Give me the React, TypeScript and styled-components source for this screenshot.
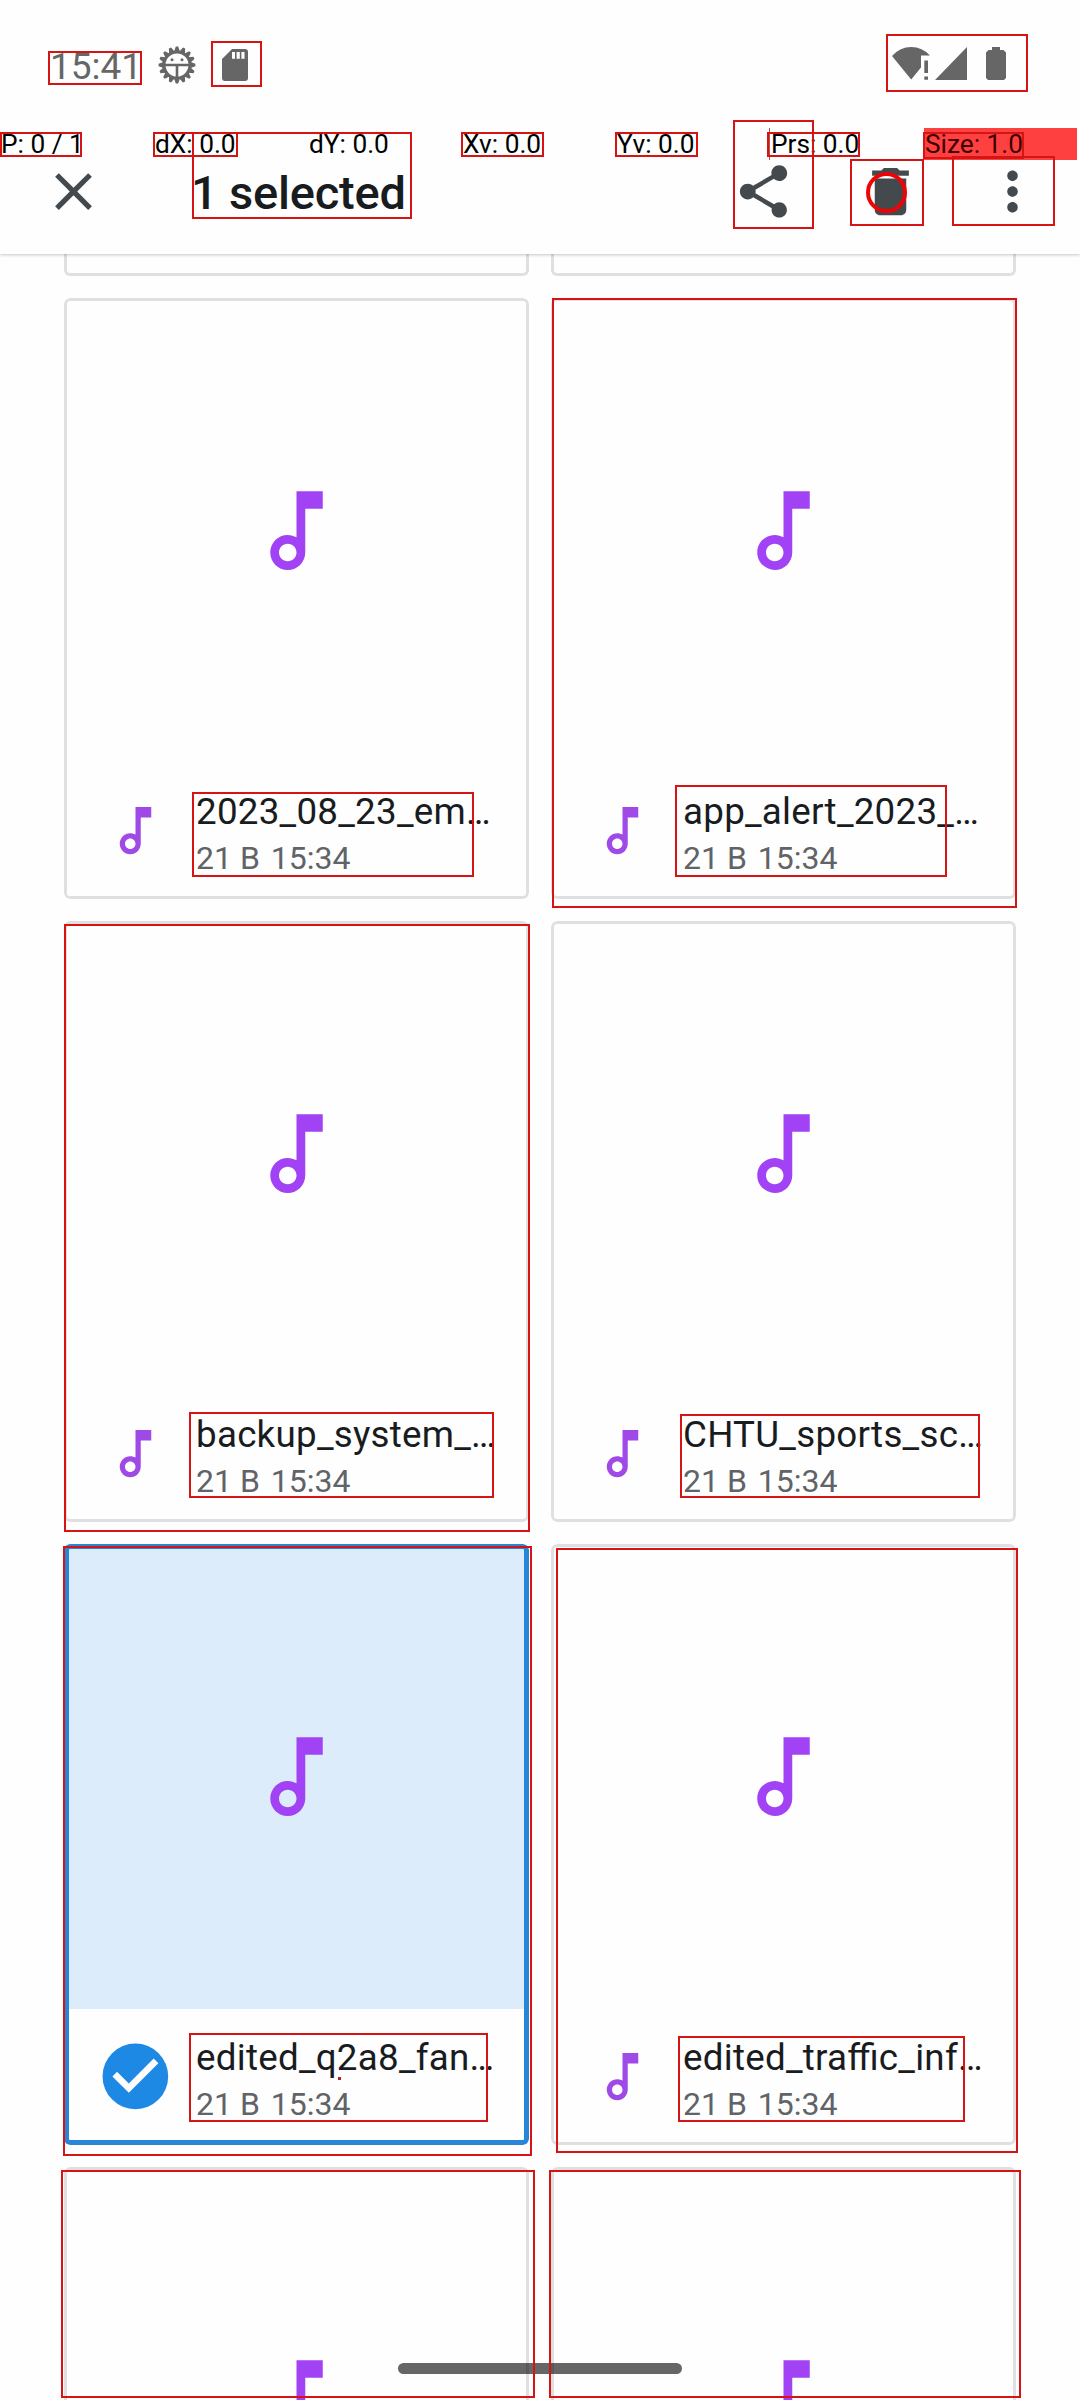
import React from "react";
import styled, { createGlobalStyle, css } from "styled-components";

const GlobalStyle = createGlobalStyle`
  * { box-sizing: border-box; }
  html, body { margin: 0; padding: 0; background: #fefefe; }
  body { font-family: Roboto, "Noto Sans", sans-serif; }
`;

const Screen = styled.div`
  position: relative;
  display: flex;
  flex-direction: column;
  width: 1080px;
  height: 2400px;
  overflow: hidden;
  background: #fefefe;
`;

const StatusBar = styled.header`
  display: flex;
  align-items: center;
  flex: none;
  height: 128px;
  padding: 2px 74px 0 50px;
  color: #666666;
`;

const Clock = styled.span`
  width: 108px;
  padding-top: 3px;
  font-size: 37px;
  line-height: 44px;
  white-space: nowrap;
`;

const StatusIcons = styled.div<{ $gap: number; $end?: boolean }>`
  display: flex;
  align-items: center;
  gap: ${(p) => p.$gap}px;
  margin-left: ${(p) => (p.$end ? "auto" : "0")};
  padding-bottom: ${(p) => (p.$end ? "3px" : "0")};
`;

const BatterySlot = styled.span`
  display: flex;
  margin-left: 14px;
`;

const Toolbar = styled.div`
  display: flex;
  align-items: center;
  flex: none;
  height: 126px;
  padding: 0 36px 0 42px;
  color: #43494d;
  position: relative;
  z-index: 1;
  background: #fefefe;
  box-shadow: 0 1px 3px rgba(0, 0, 0, 0.22);
  clip-path: inset(0 0 -5px 0);
`;

const Title = styled.h1`
  flex: 1;
  margin: 0 0 0 86px;
  padding-top: 3px;
  font-size: 47px;
  font-weight: 500;
  line-height: 56px;
  letter-spacing: -0.2px;
  color: #191c1e;
  white-space: nowrap;
`;

const Actions = styled.div`
  display: grid;
  grid-template-columns: 127.5px 122px 63px;
`;

const Glyph = styled.svg<{ $size: number }>`
  display: block;
  flex: none;
  width: ${(p) => p.$size}px;
  height: ${(p) => p.$size}px;
  fill: currentColor;
`;

const FileGrid = styled.main`
  display: grid;
  grid-template-columns: 465px 465px;
  grid-auto-rows: 601px;
  grid-template-rows: 22px;
  gap: 22px;
  padding-left: 64px;
  flex: none;
`;

const CardTail = styled.div`
  border: 3px solid #e0e0e0;
  border-top: 0;
  border-radius: 0 0 6px 6px;
`;

const Card = styled.article<{ $selected?: boolean }>`
  position: relative;
  display: flex;
  flex-direction: column;
  border-radius: 6px;
  overflow: hidden;
  &::after {
    content: "";
    position: absolute;
    inset: 0;
    border-radius: 6px;
    border: ${(p) => (p.$selected ? "5px solid #2786d8" : "3px solid #e0e0e0")};
  }
`;

const Preview = styled.div<{ $selected?: boolean }>`
  display: flex;
  align-items: center;
  justify-content: center;
  height: 465px;
  color: #a142f4;
  ${(p) => p.$selected && css`background: #ddecfb;`}
`;

const Footer = styled.div`
  display: flex;
  align-items: center;
  height: 136px;
  padding: 0 32px 1px;
`;

const IconSlot = styled.div`
  display: flex;
  justify-content: center;
  flex: none;
  width: 79px;
  margin-right: 21px;
  color: #9f49e6;
`;

const Details = styled.div`
  display: flex;
  flex-direction: column;
  min-width: 0;
  padding-top: 7px;
`;

const FileName = styled.div`
  font-size: 36.75px;
  line-height: 48px;
  letter-spacing: 0.25px;
  font-feature-settings: "liga" 1;
  color: #191c1e;
  white-space: nowrap;
`;

const Meta = styled.div`
  display: flex;
  gap: 11px;
  font-size: 32px;
  line-height: 44px;
  color: #606367;
  white-space: nowrap;
`;

const HomeHandle = styled.div`
  position: absolute;
  left: 398px;
  top: 2363px;
  width: 284px;
  height: 11px;
  border-radius: 6px;
  background: rgba(0, 0, 0, 0.6);
`;

const PointerBar = styled.div`
  position: absolute;
  left: 0;
  top: 128px;
  z-index: 2;
  display: grid;
  grid-template-columns: repeat(7, 154px);
  height: 32px;
`;

const Reading = styled.span<{ $alert?: boolean }>`
  padding-left: 1px;
  margin-right: 1px;
  font-size: 26.25px;
  line-height: 32px;
  color: ${(p) => (p.$alert ? "#400000" : "#000")};
  background: ${(p) => (p.$alert ? "#ff4040" : "transparent")};
  white-space: nowrap;
`;

const Overlay = styled.div`
  position: absolute;
  inset: 0;
  z-index: 3;
  pointer-events: none;
`;

const Mark = styled.div<{ $box: number[] }>`
  position: absolute;
  left: ${(p) => p.$box[0]}px;
  top: ${(p) => p.$box[1]}px;
  width: ${(p) => p.$box[2] - p.$box[0]}px;
  height: ${(p) => p.$box[3] - p.$box[1]}px;
  border: 2px solid #d61414;
`;

const TouchRing = styled.div`
  position: absolute;
  left: 866px;
  top: 172px;
  width: 41px;
  height: 41px;
  border: 4px solid #ee0404;
  border-radius: 50%;
`;

const TouchDot = styled.div`
  position: absolute;
  left: 338px;
  top: 2077px;
  width: 3px;
  height: 3px;
  background: #a82424;
`;

const PressureLine = styled.div`
  position: absolute;
  left: 769px;
  top: 128px;
  width: 1px;
  height: 32px;
  background: #b05050;
`;

const NOTE =
  "M12 3v10.55c-.59-.34-1.27-.55-2-.55-2.21 0-4 1.79-4 4s1.79 4 4 4 4-1.79 4-4V7h4V3h-6zm-2 16c-1.1 0-2-.9-2-2s.9-2 2-2 2 .9 2 2-.9 2-2 2z";

const Icon = ({ d, size = 63 }: { d: string; size?: number }) => (
  <Glyph $size={size} viewBox="0 0 24 24">
    <path d={d} />
  </Glyph>
);

const CLOSE =
  "M19 6.41L17.59 5 12 10.59 6.41 5 5 6.41 10.59 12 5 17.59 6.41 19 12 13.41 17.59 19 19 17.59 13.41 12z";
const SHARE =
  "M18 16.08c-.76 0-1.44.3-1.96.77L8.91 12.7c.05-.23.09-.46.09-.7s-.04-.47-.09-.7l7.05-4.11c.54.5 1.25.81 2.04.81 1.66 0 3-1.34 3-3s-1.34-3-3-3-3 1.34-3 3c0 .24.04.47.09.7L8.04 9.81C7.5 9.31 6.79 9 6 9c-1.66 0-3 1.34-3 3s1.34 3 3 3c.79 0 1.5-.31 2.04-.81l7.12 4.16c-.05.21-.08.43-.08.65 0 1.61 1.31 2.92 2.92 2.92s2.92-1.31 2.92-2.92-1.31-2.92-2.92-2.92z";
const TRASH =
  "M6 19c0 1.1.9 2 2 2h8c1.1 0 2-.9 2-2V7H6v12zM19 4h-3.5l-1-1h-5l-1 1H5v2h14V4z";
const MORE =
  "M12 8c1.1 0 2-.9 2-2s-.9-2-2-2-2 .9-2 2 .9 2 2 2zm0 2c-1.1 0-2 .9-2 2s.9 2 2 2 2-.9 2-2-.9-2-2-2zm0 6c-1.1 0-2 .9-2 2s.9 2 2 2 2-.9 2-2-.9-2-2-2z";

const teeth = Array.from({ length: 16 }, (_, i) => i * 22.5);

const GearIcon = () => (
  <svg width="38" height="38" viewBox="-19 -19 38 38">
    {teeth.map((a) => (
      <path key={a} d="M-2.9 -13.5L-1.2 -18.4H1.2L2.9 -13.5Z" fill="#666" transform={`rotate(${a})`} />
    ))}
    <circle r="13" fill="none" stroke="#666" strokeWidth="3" />
    <path d="M-13 0H13M0 0V13" stroke="#666" strokeWidth="2.6" />
    <circle cx="-5" cy="-5.3" r="1.5" fill="#666" />
    <circle cx="5" cy="-5.3" r="1.5" fill="#666" />
  </svg>
);

const SdIcon = () => (
  <svg width="26" height="32" viewBox="0 0 26 32">
    <path
      fillRule="evenodd"
      fill="#666"
      d="M10 0H23Q26 0 26 3V29Q26 32 23 32H3Q0 32 0 29V10ZM10 3V9.7H13V3ZM14.6 3V9.7H17.8V3ZM19.4 3V9.7H22.5V3Z"
    />
  </svg>
);

const WifiIcon = () => (
  <svg width="38" height="33" viewBox="0 0 38 33">
    <path fill="#666" d="M0 9Q8 0 19.2 0T38 8.6H29V20.5L19.2 32.5Z" />
    <path fill="#666" d="M32.3 13.5H36V26H32.3ZM32.3 29.5H36V32.8H32.3Z" />
  </svg>
);

const SignalIcon = () => (
  <svg width="32" height="33" viewBox="0 0 32 33">
    <path fill="#666" d="M32 0V33H0Z" />
  </svg>
);

const BatteryIcon = () => (
  <svg width="20" height="33" viewBox="0 0 20 33">
    <path fill="#666" d="M6 0H14V3H17.5L20 5.5V31L18 33H2L0 31V5.5L2.5 3H6Z" />
  </svg>
);

const CheckIcon = () => (
  <Glyph $size={78.75} viewBox="0 0 24 24">
    <circle cx="12" cy="12" r="10" fill="#1e88e5" />
    <path fill="#fefefe" d="M10 17l-5-5 1.41-1.41L10 14.17l7.59-7.59L19 8z" />
  </Glyph>
);

type FileItem = { name: string; selected?: boolean };

const files: FileItem[] = [
  { name: "2023_08_23_em…" },
  { name: "app_alert_2023_…" },
  { name: "backup_system_…" },
  { name: "CHTU_sports_sc…" },
  { name: "edited_q2a8_fan…", selected: true },
  { name: "edited_traffic_inf…" },
];

const FileCard = ({ file }: { file: FileItem }) => (
  <Card $selected={file.selected}>
    <Preview $selected={file.selected}>
      <Icon d={NOTE} size={105} />
    </Preview>
    <Footer>
      <IconSlot>{file.selected ? <CheckIcon /> : <Icon d={NOTE} />}</IconSlot>
      <Details>
        <FileName>{file.name}</FileName>
        <Meta>
          <span>21 B</span>
          <span>15:34</span>
        </Meta>
      </Details>
    </Footer>
  </Card>
);

const readings = ["P: 0 / 1", "dX: 0.0", "dY: 0.0", "Xv: 0.0", "Yv: 0.0", "Prs: 0.0", "Size: 1.0"];

/* left, top, right, bottom of every outlined region */
const marks = [
  [48, 51, 142, 85],
  [211, 41, 262, 87],
  [886, 34, 1028, 92],
  [0, 132, 82, 157],
  [153, 132, 238, 157],
  [192, 132, 412, 219],
  [461, 132, 544, 157],
  [615, 132, 698, 157],
  [733, 120, 814, 229],
  [767, 132, 860, 157],
  [923, 132, 1024, 159],
  [850, 159, 924, 226],
  [952, 156, 1055, 226],
  [552, 298, 1017, 908],
  [192, 792, 474, 877],
  [675, 785, 947, 877],
  [64, 924, 530, 1532],
  [189, 1412, 494, 1498],
  [680, 1414, 980, 1498],
  [63, 1546, 532, 2156],
  [189, 2033, 488, 2122],
  [556, 1548, 1018, 2153],
  [678, 2036, 965, 2122],
  [61, 2170, 535, 2398],
  [549, 2170, 1021, 2398],
];

export default function App() {
  return (
    <>
      <GlobalStyle />
      <Screen>
        <StatusBar>
          <Clock>15:41</Clock>
          <StatusIcons $gap={26}>
            <GearIcon />
            <SdIcon />
          </StatusIcons>
          <StatusIcons $gap={5} $end>
            <WifiIcon />
            <SignalIcon />
            <BatterySlot>
              <BatteryIcon />
            </BatterySlot>
          </StatusIcons>
        </StatusBar>
        <Toolbar>
          <Icon d={CLOSE} />
          <Title>1 selected</Title>
          <Actions>
            <Icon d={SHARE} />
            <Icon d={TRASH} />
            <Icon d={MORE} />
          </Actions>
        </Toolbar>
        <FileGrid>
          <CardTail />
          <CardTail />
          {files.map((f) => (
            <FileCard key={f.name} file={f} />
          ))}
          {[0, 1].map((i) => (
            <Card key={i}>
              <Preview>
                <Icon d={NOTE} size={105} />
              </Preview>
            </Card>
          ))}
        </FileGrid>
        <HomeHandle />
        <PointerBar>
          {readings.map((r, i) => (
            <Reading key={r} $alert={i === 6}>
              {r}
            </Reading>
          ))}
        </PointerBar>
        <Overlay>
          <PressureLine />
          {marks.map((m) => (
            <Mark key={m.join()} $box={m} />
          ))}
          <TouchRing />
          <TouchDot />
        </Overlay>
      </Screen>
    </>
  );
}
